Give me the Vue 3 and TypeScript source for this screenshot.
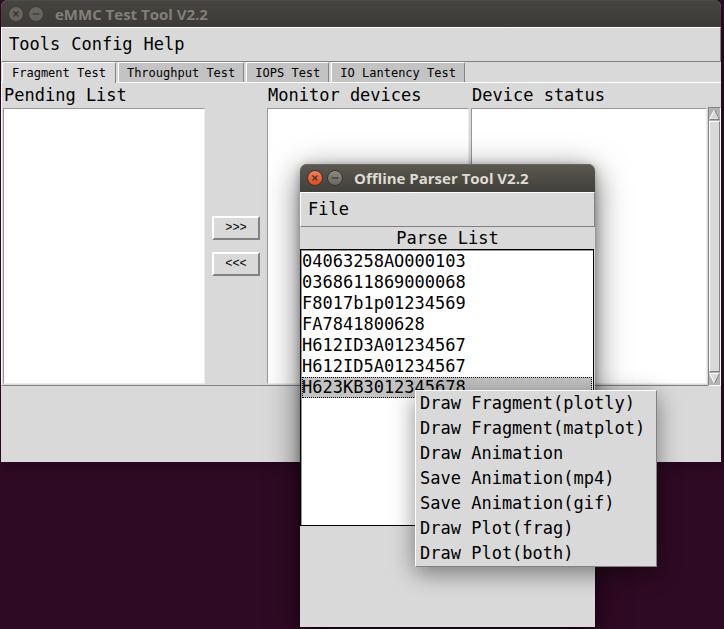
<script setup lang="ts">
import { ref } from 'vue'

const tabs = ['Fragment Test', 'Throughput Test', 'IOPS Test', 'IO Lantency Test']
const activeTab = ref(0)

const menus = ['Tools', 'Config', 'Help']

const devices = [
  '04063258AO000103',
  '0368611869000068',
  'F8017b1p01234569',
  'FA7841800628',
  'H612ID3A01234567',
  'H612ID5A01234567',
  'H623KB3012345678',
]
const selected = ref(6)

const actions = [
  'Draw Fragment(plotly)',
  'Draw Fragment(matplot)',
  'Draw Animation',
  'Save Animation(mp4)',
  'Save Animation(gif)',
  'Draw Plot(frag)',
  'Draw Plot(both)',
]
</script>

<template>
  <main class="desktop">
    <section class="window main-window" aria-labelledby="main-title">
      <header class="titlebar">
        <button class="dot" type="button" aria-label="Close">
          <svg viewBox="0 0 14 14"><path d="M4.5 4.5l5 5M9.5 4.5l-5 5" /></svg>
        </button>
        <button class="dot" type="button" aria-label="Minimize">
          <svg viewBox="0 0 14 14"><path d="M3.5 7h7" /></svg>
        </button>
        <h1 id="main-title">eMMC Test Tool V2.2</h1>
      </header>
      <nav class="menubar">
        <button v-for="m in menus" :key="m" type="button">{{ m }}</button>
      </nav>
      <div class="tabs" role="tablist">
        <button
          v-for="(t, i) in tabs"
          :key="t"
          type="button"
          role="tab"
          class="tab"
          :class="{ active: i === activeTab }"
          :aria-selected="i === activeTab"
          @click="activeTab = i"
        >{{ t }}</button>
      </div>
      <div class="pane">
        <div class="column">
          <h2>Pending List</h2>
          <div class="list"></div>
        </div>
        <div class="movers">
          <button type="button">&gt;&gt;&gt;</button>
          <button type="button">&lt;&lt;&lt;</button>
        </div>
        <div class="column">
          <h2>Monitor devices</h2>
          <div class="list"></div>
        </div>
        <div class="column status">
          <h2>Device status</h2>
          <div class="list"></div>
        </div>
        <div class="scrollbar">
          <svg viewBox="0 0 11 11">
            <path class="face" d="M5.5 0L11 11H0z" />
            <path class="light" d="M5.5 0.5L0.5 10.5" />
            <path class="dark" d="M5.5 0.5L10.5 10.5H0.5" />
          </svg>
          <div class="thumb"></div>
          <svg viewBox="0 0 11 11">
            <path class="face" d="M0 0H11L5.5 11z" />
            <path class="light" d="M10.5 0.5H0.5L5.5 10.5" />
            <path class="dark" d="M10.5 0.5L5.5 10.5" />
          </svg>
        </div>
      </div>
    </section>

    <section class="window dialog" aria-labelledby="dialog-title">
      <header class="titlebar">
        <button class="dot close" type="button" aria-label="Close">
          <svg viewBox="0 0 14 14"><path d="M4.5 4.5l5 5M9.5 4.5l-5 5" /></svg>
        </button>
        <button class="dot" type="button" aria-label="Minimize">
          <svg viewBox="0 0 14 14"><path d="M3.5 7h7" /></svg>
        </button>
        <h1 id="dialog-title">Offline Parser Tool V2.2</h1>
      </header>
      <nav class="menubar">
        <button type="button">File</button>
      </nav>
      <h2>Parse List</h2>
      <ul class="parse-list">
        <li v-for="(d, i) in devices" :key="d">
          <button type="button" :class="{ selected: i === selected }" @click="selected = i">{{ d }}</button>
        </li>
      </ul>
    </section>

    <ul class="context-menu">
      <li v-for="a in actions" :key="a">
        <button type="button">{{ a }}</button>
      </li>
    </ul>
  </main>
</template>

<style>
body {
  margin: 0;
  background: #2f0a24;
}
</style>

<style scoped>
* {
  box-sizing: border-box;
}
.desktop {
  position: relative;
  min-height: 100vh;
  overflow: hidden;
  background: #2f0a24;
  color: #000;
  font: 17px/21px 'DejaVu Sans Mono', monospace;
}
button {
  margin: 0;
  padding: 0;
  border: 0;
  background: none;
  color: inherit;
  font: inherit;
  text-align: left;
}
ul {
  margin: 0;
  padding: 0;
  list-style: none;
}
h2 {
  margin: 0;
  font: inherit;
  line-height: 22px;
  white-space: nowrap;
}
.window {
  position: absolute;
  background: #d9d9d9;
  border-radius: 7px 7px 0 0;
}
.main-window {
  top: 0;
  left: 1px;
  right: 3px;
  height: 462px;
  box-shadow: 0 4px 14px rgba(0, 0, 0, 0.3);
}
.dialog {
  top: 164px;
  left: 300px;
  width: 295px;
  height: 463px;
  box-shadow: 0 8px 32px rgba(0, 0, 0, 0.6), 0 2px 8px rgba(0, 0, 0, 0.3);
}
.titlebar {
  display: flex;
  align-items: center;
  gap: 4px;
  height: 28px;
  padding-left: 7px;
  border-radius: 7px 7px 0 0;
  background: linear-gradient(#5b5950, #403f3a);
  box-shadow: inset 0 1px #68665d;
  color: #dfdbd2;
}
.titlebar h1 {
  margin: 0 0 0 7px;
  font: bold 15px/20px 'Open Sans', sans-serif;
  white-space: nowrap;
}
.main-window .titlebar {
  height: 27px;
  background: linear-gradient(#454440, #3c3b37);
  box-shadow: inset 0 1px #4c4b46;
  color: #827f78;
}
.dot {
  width: 16px;
  height: 16px;
  border: 1px solid #35342f;
  border-radius: 50%;
  background: linear-gradient(#8b887e, #6a685f);
}
.dot svg {
  display: block;
  width: 14px;
  height: 14px;
}
.dot path {
  fill: none;
  stroke: #35342f;
  stroke-width: 1.2;
}
.main-window .dot {
  border-color: #3c3b37;
  background: #66645e;
}
.dot.close {
  background: linear-gradient(#f48159, #df4a1c);
}
.menubar {
  display: flex;
  align-items: center;
  gap: 11px;
  height: 35px;
  padding-left: 7px;
  border: 1px solid;
  border-color: #fff #828282 #828282 #fff;
}
.tabs {
  display: flex;
  gap: 2px;
  height: 21px;
  padding-left: 1px;
  border-bottom: 1px solid #fff;
}
.tab {
  height: 20px;
  padding: 0 8px;
  border: 1px solid;
  border-color: #fff #828282 transparent #fff;
  border-bottom: 0;
  border-radius: 2px 2px 0 0;
  background: #c3c3c3;
  font-size: 12px;
  line-height: 20px;
  white-space: nowrap;
}
.tab.active {
  height: 21px;
  padding: 0 9px;
  background: #d9d9d9;
}
.pane {
  display: flex;
  height: 303px;
  padding-left: 1px;
  border-left: 1px solid #fff;
  border-bottom: 1px solid #828282;
}
.column {
  width: 202px;
}
.column h2 {
  height: 25px;
  padding-left: 1px;
  line-height: 25px;
}
.column.status {
  flex: 1;
  margin-left: 2px;
}
.list {
  height: 276px;
  border: 1px solid;
  border-color: #979797 #ececec #ececec #979797;
  background: #fff;
}
.movers {
  display: flex;
  flex-direction: column;
  align-items: center;
  justify-content: center;
  gap: 12px;
  width: 62px;
  padding-top: 24px;
}
.movers button {
  width: 48px;
  height: 24px;
  border: 2px solid;
  border-color: #fff #828282 #828282 #fff;
  font-family: 'Liberation Mono', monospace;
  font-size: 12px;
  line-height: 20px;
  text-align: center;
}
.scrollbar {
  display: flex;
  flex-direction: column;
  width: 13px;
  height: 279px;
  margin: 24px 0 0 1px;
  padding: 1px 0;
  border: 1px solid;
  border-color: #828282 #fff #fff #828282;
  background: #b3b3b3;
}
.scrollbar svg {
  width: 11px;
  height: 11px;
  flex: none;
}
.scrollbar path {
  fill: none;
}
.scrollbar .face {
  fill: #d9d9d9;
}
.scrollbar .light {
  stroke: #fff;
}
.scrollbar .dark {
  stroke: #828282;
}
.thumb {
  flex: 1;
  margin: 1px 0;
  border: 1px solid;
  border-color: #fff #828282 #828282 #fff;
  background: #d9d9d9;
}
.dialog h2 {
  text-align: center;
}
.parse-list {
  height: 277px;
  margin-right: 1px;
  padding: 1px;
  border: 1px solid #000;
  background: #fff;
  box-shadow: inset 1px 1px #979797;
}
.parse-list button {
  display: block;
  width: 100%;
  height: 21px;
  white-space: nowrap;
}
.parse-list .selected {
  background: #c3c3c3;
  outline: 1px dotted #000;
  outline-offset: -1px;
}
.context-menu {
  position: absolute;
  top: 390px;
  left: 415px;
  width: 242px;
  border: 1px solid;
  border-color: #fff #828282 #828282 #fff;
  background: #d9d9d9;
  box-shadow: 0 6px 22px rgba(0, 0, 0, 0.45);
}
.context-menu button {
  display: block;
  width: 100%;
  height: 25px;
  padding-left: 4px;
  white-space: nowrap;
}
</style>
